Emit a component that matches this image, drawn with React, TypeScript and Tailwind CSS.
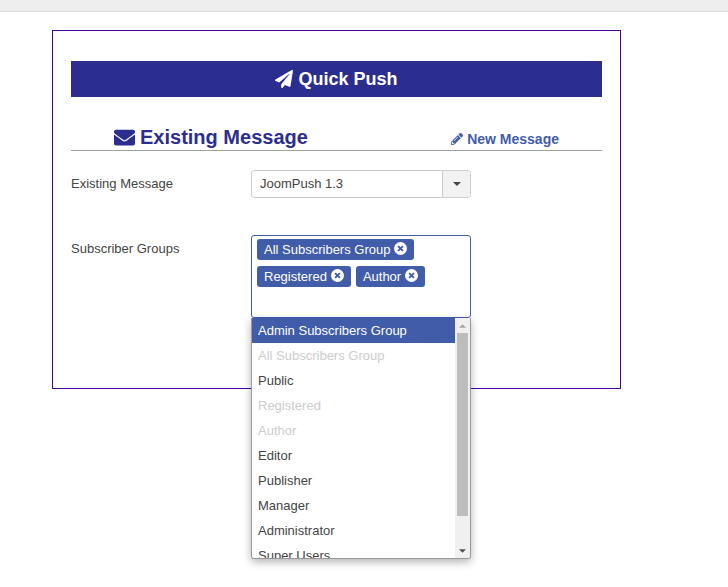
import { FaEnvelope, FaPaperPlane, FaPencilAlt } from "react-icons/fa";

const selected = [["All Subscribers Group"], ["Registered", "Author"]];

const options = [
  { label: "Admin Subscribers Group", state: "active" },
  { label: "All Subscribers Group", state: "disabled" },
  { label: "Public", state: "" },
  { label: "Registered", state: "disabled" },
  { label: "Author", state: "disabled" },
  { label: "Editor", state: "" },
  { label: "Publisher", state: "" },
  { label: "Manager", state: "" },
  { label: "Administrator", state: "" },
  { label: "Super Users", state: "" },
];

function Triangle({ up, className }: { up?: boolean; className: string }) {
  return (
    <svg viewBox="0 0 8 4" className={className} aria-hidden>
      <path d={up ? "M4 0L8 4H0Z" : "M0 0H8L4 4Z"} fill="currentColor" />
    </svg>
  );
}

function Chip({ label }: { label: string }) {
  return (
    <span className="inline-flex h-[21px] items-center gap-[4px] rounded-[3px] bg-[#415ca8] pl-[7px] pr-[7px] text-[13px] text-white">
      {label}
      <svg viewBox="0 0 14 14" className="mb-[2px] h-[13px] w-[13px]" aria-hidden>
        <circle cx="7" cy="7" r="7" fill="#fff" />
        <path d="M4.4 4.4L9.6 9.6M9.6 4.4L4.4 9.6" stroke="#415ca8" strokeWidth="2" />
      </svg>
    </span>
  );
}

export default function App() {
  return (
    <div className="h-[587px] w-[728px] overflow-hidden bg-white font-['Liberation_Sans',Arial,sans-serif] text-[13px] text-[#444]">
      <div className="h-[12px] border-b border-[#ddd] bg-[#eee]" />

      <div className="ml-[52px] mt-[18px] h-[359px] w-[569px] border border-[#4b00a0] px-[18px] pt-[30px]">
        <div className="flex h-[36px] items-center justify-center gap-[5px] bg-[#2c2e8f] text-[18px] font-bold text-white">
          <FaPaperPlane className="h-[18px] w-[18px]" aria-hidden />
          Quick Push
        </div>

        <div className="mt-[28px] flex h-[26px] items-end border-b border-[#9ba39b] pb-[1px]">
          <div className="ml-[43px] flex items-center gap-[5px] text-[20px] font-bold leading-[24px] text-[#2c2e8f]">
            <FaEnvelope className="h-[21px] w-[21px]" aria-hidden />
            Existing Message
          </div>
          <div className="ml-auto mr-[43px] flex items-center gap-[4px] text-[14px] font-bold leading-[20px] text-[#415ca8]">
            <FaPencilAlt className="h-[12px] w-[12px]" aria-hidden />
            New Message
          </div>
        </div>

        <div className="mt-[19px] flex items-center">
          <div className="w-[180px]">Existing Message</div>
          <div className="flex h-[28px] w-[220px] overflow-hidden rounded-[3px] border border-[#ccc]">
            <div className="flex flex-1 items-center pl-[8px]">JoomPush 1.3</div>
            <div className="flex w-[28px] items-center justify-center border-l border-[#ccc] bg-[#f2f2f2]">
              <Triangle className="h-[4px] w-[8px] text-[#444]" />
            </div>
          </div>
        </div>

        <div className="mt-[37px] flex items-start">
          <div className="mt-[4px] w-[180px]">Subscriber Groups</div>
          <div className="relative">
            <div className="flex h-[83px] w-[220px] flex-col gap-[6px] rounded-[3px] border border-[#415ca8] pl-[5px] pt-[3px]">
              {selected.map((row) => (
                <div key={row[0]} className="flex gap-[5px]">
                  {row.map((label) => (
                    <Chip key={label} label={label} />
                  ))}
                </div>
              ))}
            </div>

            <div className="absolute left-0 top-[83px] flex h-[241px] w-[220px] overflow-hidden rounded-b-[3px] border border-t-0 border-[#999] bg-white shadow-[0_3px_8px_rgba(0,0,0,0.3)]">
              <div className="flex-1 overflow-hidden">
                {options.map((option) => (
                  <div
                    key={option.label}
                    className={
                      option.state === "active"
                        ? "flex h-[25px] shrink-0 items-center bg-[#415ca8] pl-[6px] text-white"
                        : option.state === "disabled"
                          ? "flex h-[25px] shrink-0 items-center pl-[6px] text-[#ccc]"
                          : "flex h-[25px] shrink-0 items-center pl-[6px]"
                    }
                  >
                    {option.label}
                  </div>
                ))}
              </div>
              <div className="flex w-[15px] flex-col bg-[#f0f0f0] px-[2px]">
                <div className="flex h-[15px] shrink-0 items-center justify-center">
                  <Triangle up className="h-[4px] w-[7px] text-[#a3a3a3]" />
                </div>
                <div className="h-[183px] w-full shrink-0 bg-[#bdbdbd]" />
                <div className="mt-auto flex h-[15px] shrink-0 items-center justify-center">
                  <Triangle className="h-[4px] w-[7px] text-[#505050]" />
                </div>
              </div>
            </div>
          </div>
        </div>
      </div>
    </div>
  );
}
